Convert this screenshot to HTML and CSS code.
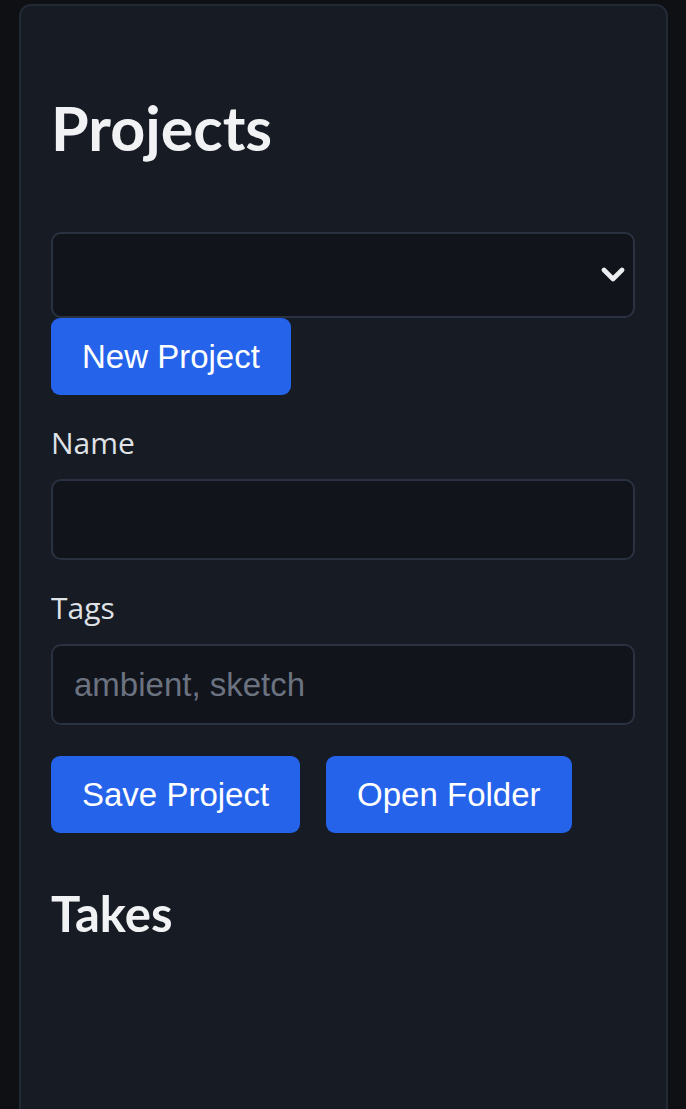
FILE: index.html
```html
<!DOCTYPE html>
<html lang="en">
<head>
<meta charset="utf-8">
<title>Projects</title>
<link rel="stylesheet" href="styles.css">
</head>
<body>
<div class="page">
  <section class="panel">
    <h1 class="title">Projects</h1>
    <div class="select-wrap">
      <select class="select" aria-label="Project"></select>
      <svg class="chevron" width="24" height="15" viewBox="0 0 24 15" aria-hidden="true">
        <polyline points="3,3 12,12 21,3" fill="none" stroke="#eceef1" stroke-width="4.6" stroke-linecap="round" stroke-linejoin="round"/>
      </svg>
    </div>
    <button class="btn">New Project</button>
    <div class="field">
      <label class="label" for="name">Name</label>
      <input class="input" id="name" type="text">
    </div>
    <div class="field">
      <label class="label" for="tags">Tags</label>
      <input class="input" id="tags" type="text" placeholder="ambient, sketch">
    </div>
    <div class="actions">
      <button class="btn">Save Project</button>
      <button class="btn">Open Folder</button>
    </div>
    <h2 class="subtitle">Takes</h2>
  </section>
</div>
</body>
</html>
```
FILE: styles.css
```css
html, body {
  margin: 0;
  padding: 0;
  background: #0f1013;
  overflow: hidden;
}
body {
  font-family: "Open Sans", "Noto Sans", sans-serif;
  color: #e5e7eb;
}
.page {
  height: 1109px;
  overflow: hidden;
  padding: 4px 18px 0 19px;
  box-sizing: border-box;
}
.panel {
  background: #171b24;
  border: 2px solid #222a36;
  border-radius: 12px;
  min-height: 1160px;
  padding: 91px 31px 0 30px;
  box-sizing: border-box;
}
.title {
  margin: 0 0 74px;
  font-family: Lato, "Open Sans", sans-serif;
  font-size: 61px;
  line-height: 61px;
  font-weight: 700;
  color: #f1f2f4;
}
.select-wrap {
  position: relative;
  height: 86px;
}
.select {
  display: block;
  width: 100%;
  height: 86px;
  box-sizing: border-box;
  appearance: none;
  -webkit-appearance: none;
  background: #11141b;
  border: 2px solid #2a3241;
  border-radius: 10px;
  margin: 0;
  color: #e5e7eb;
}
.chevron {
  position: absolute;
  right: 10px;
  top: 35px;
}
.btn {
  display: block;
  height: 77px;
  padding: 0 31px;
  margin: 0;
  border: 0;
  border-radius: 9px;
  background: #2563eb;
  color: #ffffff;
  font-family: "Liberation Sans", Arial, sans-serif;
  font-size: 33px;
  line-height: 77px;
}
.field {
  margin-top: 30px;
}
.label {
  display: block;
  font-size: 30px;
  line-height: 36px;
  color: #dfe2e7;
  margin-bottom: 18px;
}
.input {
  display: block;
  width: 100%;
  height: 81px;
  box-sizing: border-box;
  margin: 0;
  padding: 0 21px;
  background: #11141b;
  border: 2px solid #2a3241;
  border-radius: 10px;
  color: #e5e7eb;
  font-family: "Liberation Sans", Arial, sans-serif;
  font-size: 33px;
  outline: none;
}
.input::placeholder {
  color: #6b7280;
}
.actions {
  display: flex;
  gap: 26px;
  margin-top: 31px;
}
.subtitle {
  margin: 56px 0 0;
  font-family: Lato, "Open Sans", sans-serif;
  font-size: 49px;
  line-height: 49px;
  font-weight: 700;
  color: #f1f2f4;
}
```
